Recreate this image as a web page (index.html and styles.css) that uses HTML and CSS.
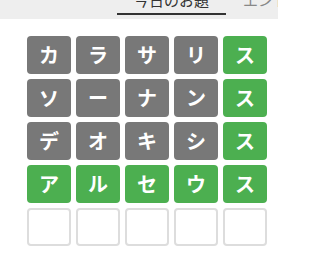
FILE: index.html
```html
<!DOCTYPE html>
<html lang="ja">
<head>
<meta charset="utf-8">
<link rel="stylesheet" href="styles.css">
</head>
<body>
<nav class="tabs">
  <div class="tab active">今日のお題</div>
  <div class="tab rest">エントリー</div>
</nav>
<main class="board">
  <div class="tile gray">カ</div><div class="tile gray">ラ</div><div class="tile gray">サ</div><div class="tile gray">リ</div><div class="tile green">ス</div>
  <div class="tile gray">ソ</div><div class="tile gray">ー</div><div class="tile gray">ナ</div><div class="tile gray">ン</div><div class="tile green">ス</div>
  <div class="tile gray">デ</div><div class="tile gray">オ</div><div class="tile gray">キ</div><div class="tile gray">シ</div><div class="tile green">ス</div>
  <div class="tile green">ア</div><div class="tile green">ル</div><div class="tile green">セ</div><div class="tile green">ウ</div><div class="tile green">ス</div>
  <div class="tile empty"></div><div class="tile empty"></div><div class="tile empty"></div><div class="tile empty"></div><div class="tile empty"></div>
</main>
</body>
</html>
```
FILE: styles.css
```css
html, body {
  margin: 0;
  padding: 0;
  background: #ffffff;
  overflow: hidden;
  width: 278px;
}
body {
  font-family: "Noto Sans CJK JP", "Noto Sans", sans-serif;
}
.tabs {
  display: flex;
  width: 100%;
  box-sizing: border-box;
  background: #eeeeee;
  margin-top: -11px;
  padding-left: 117px;
  padding-bottom: 4px;
  white-space: nowrap;
  overflow: hidden;
}
.tab {
  flex: none;
  font-size: 15px;
  line-height: 22px;
  padding: 0 17px 2px;
  border-bottom: 2px solid transparent;
  color: #888888;
}
.tab.rest {
  flex: 0 1 auto;
  min-width: 0;
  overflow: hidden;
  padding-right: 0;
}
.tab.active {
  color: #333333;
  border-bottom-color: #333333;
}
.board {
  display: grid;
  grid-template-columns: repeat(5, 44px);
  grid-auto-rows: 38px;
  gap: 5px;
  margin: 17px 0 0 27px;
}
.tile {
  box-sizing: border-box;
  display: flex;
  align-items: center;
  justify-content: center;
  border-radius: 4px;
  color: #ffffff;
  font-weight: bold;
  font-size: 20px;
  line-height: 1;
}
.gray {
  background: #787878;
}
.green {
  background: #4caf50;
}
.empty {
  border: 2px solid #dddddd;
}
```
